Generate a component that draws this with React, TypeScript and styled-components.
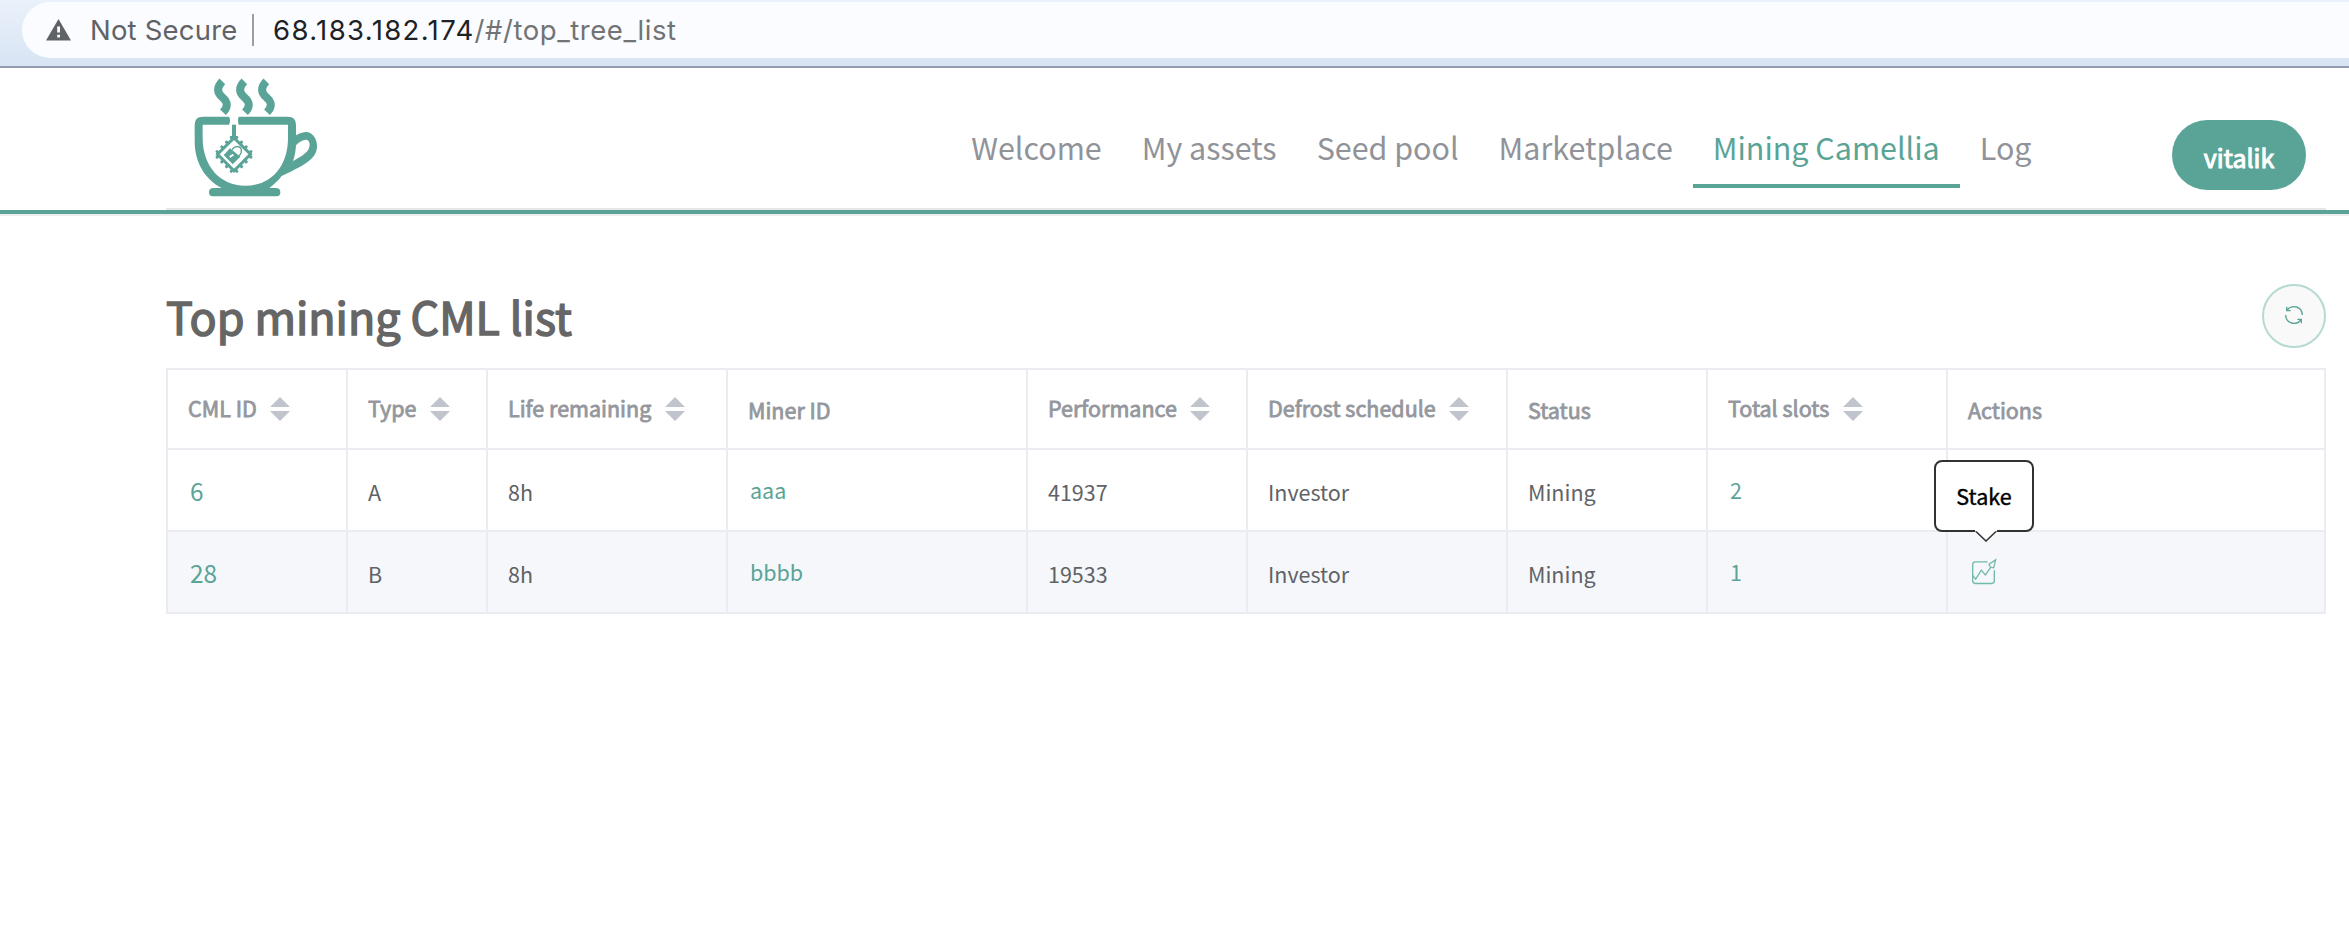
import React from "react";
import styled, { createGlobalStyle } from "styled-components";

const green = "#5aa497";
const line = "#ebecf2";

const GlobalStyle = createGlobalStyle`
  * { box-sizing: border-box; }
  body {
    margin: 0;
    background: #fff;
    font-family: "Noto Sans CJK SC", "Noto Sans", sans-serif;
    color: #606266;
    -webkit-font-smoothing: antialiased;
  }
`;

const Page = styled.div`
  width: 2349px;
  height: 930px;
  overflow: hidden;
`;

/* Browser bar */
const BrowserBar = styled.div`
  height: 68px;
  padding: 2px 0 8px 22px;
  border-bottom: 2px solid #939cae;
  background: linear-gradient(#eaf1fa, #d8e4f4);
`;

const AddressField = styled.div`
  height: 56px;
  display: flex;
  align-items: center;
  padding-left: 24px;
  border-radius: 28px 0 0 28px;
  background: #fbfcff;
  font-family: Inter, "Liberation Sans", sans-serif;
  font-size: 27.5px;
  line-height: 56px;
  color: #5f6368;
  white-space: pre;
`;

const SecurityLabel = styled.span`
  margin-left: 19px;
  letter-spacing: 0.2px;
`;

const AddressDivider = styled.span`
  width: 2px;
  height: 32px;
  margin: 0 19.5px 0 14px;
  background: #9b9ea3;
`;

const Host = styled.span`
  color: #202124;
  letter-spacing: 1.36px;
`;

const Path = styled.span`
  color: #717375;
  letter-spacing: 0.55px;
`;

/* Site header */
const Header = styled.header`
  height: 148px;
  border-bottom: 2px solid #eeeeee;
`;

const HeaderFrame = styled.div`
  border-bottom: 4px solid ${green};
  padding-left: 166px;
`;

const HeaderInner = styled.div`
  width: 2160px;
  height: 142px;
  display: flex;
  justify-content: flex-end;
  align-items: flex-start;
  border-bottom: 2px solid #e6e6e9;
`;

const Logo = styled.svg`
  width: 130px;
  height: 124px;
  margin: 8px auto 0 24px;
`;

const Nav = styled.nav`
  display: flex;
  margin-top: 36px;
  margin-right: 120.5px;
`;

const NavItem = styled.a<{ $active?: boolean }>`
  height: 84px;
  padding: 1px 20px 0;
  border-bottom: 4px solid ${(p) => (p.$active ? green : "transparent")};
  color: ${(p) => (p.$active ? green : "#909399")};
  font-size: 30.45px;
  line-height: 85px;
  white-space: nowrap;
`;

const UserButton = styled.button`
  width: 134px;
  height: 70px;
  margin: 52px 20px 0 0;
  padding: 3px 0 0;
  border: 0;
  border-radius: 35px;
  background: ${green};
  color: #fff;
  font: 25px/64px "Noto Sans CJK SC", sans-serif;
  -webkit-text-stroke: 1px #fff;
`;

/* Content */
const Content = styled.main`
  width: 2160px;
  margin-left: 166px;
  padding-top: 68px;
`;

const TitleRow = styled.div`
  height: 84px;
  display: flex;
  justify-content: space-between;
  align-items: flex-start;
`;

const Title = styled.h1`
  margin: 0;
  font-size: 44.8px;
  font-weight: 400;
  line-height: 64px;
  color: #666;
  -webkit-text-stroke: 1.5px #666;
`;

const RefreshButton = styled.button`
  width: 64px;
  height: 64px;
  display: grid;
  place-items: center;
  padding: 0 0 2px;
  border: 2px solid #b5dad3;
  border-radius: 50%;
  background: #f9f9f9;
`;

const Table = styled.div`
  width: 2160px;
  border: 2px solid ${line};
  border-width: 2px 0 0 2px;
  font-size: 21.5px;
`;

const Row = styled.div<{ $head?: boolean; $striped?: boolean }>`
  height: ${(p) => (p.$head ? 80 : 82)}px;
  display: grid;
  grid-template-rows: 100%;
  grid-template-columns: 180px 140px 240px 300px 220px 260px 200px 240px 378px;
  background: ${(p) => (p.$striped ? "#f5f7fb" : "#fff")};
`;

const Cell = styled.div`
  display: flex;
  align-items: center;
  padding: 2px 0 0 20px;
  border: solid ${line};
  border-width: 0 2px 2px 0;
  white-space: nowrap;
`;

const HeadCell = styled(Cell)<{ $sortable?: boolean }>`
  padding-top: ${(p) => (p.$sortable ? 0 : 2)}px;
  padding-bottom: ${(p) => (p.$sortable ? 2 : 0)}px;
  color: #94979d;
  -webkit-text-stroke: 0.8px #94979d;
`;

const HeadLabel = styled.span`
  margin-top: -2px;
`;

const SortIcon = styled.svg`
  width: 20px;
  height: 24px;
  margin: 1px 0 0 13.5px;
`;

const TextLink = styled.a<{ $large?: boolean }>`
  padding-left: 2px;
  margin-bottom: ${(p) => (p.$large ? 1 : 4)}px;
  color: ${green};
  font-size: ${(p) => (p.$large ? 24.4 : 21.5)}px;
`;

const ActionSlot = styled.div`
  position: relative;
  width: 32px;
  height: 78px;
  padding: 24px 0 0 3px;
`;

const Tooltip = styled.div`
  position: absolute;
  left: -34px;
  bottom: 80px;
  z-index: 1;
  width: 100px;
  height: 72px;
  border: 2px solid #303133;
  border-radius: 8px;
  background: #fff;
  color: #000;
  font-size: 21.5px;
  line-height: 68px;
  text-align: center;
  -webkit-text-stroke: 0.4px #000;
`;

const TooltipArrow = styled.svg`
  position: absolute;
  left: 39px;
  top: 67px;
  width: 22px;
  height: 13px;
`;

const WarningIcon = () => (
  <svg width="25" height="22" viewBox="0 0 25 22">
    <path d="M12.5 0 25 21.5H0Z" fill="#5f6368" />
    <path d="M11.2 7.5h2.8v6h-2.8zM11.2 15.7h2.8v2.8h-2.8z" fill="#fff" />
  </svg>
);

const steam = "M127 46C109 64 111 80 127 94C144 109 145 122 129 139";
const teeth = [-30, -10, 10, 30];

const CupLogo = () => (
  <Logo viewBox="30 30 390 372">
    <g fill="none" stroke={green} strokeWidth="24">
      <path d={steam} />
      <path d={steam} transform="translate(66 0)" />
      <path d={steam} transform="translate(132 0)" />
    </g>
    <path
      fill={green}
      fillRule="evenodd"
      d="M68 152H147Q153 164 147 176H68V215C68 300 120 359 196 359C275 359 324 300 324 215V176H176Q172 164 176 152H324Q348 152 348 176V208C360 200 372 198 380 198C400 200 412 222 411 242C409 275 385 292 305 330C295 345 280 356 268 366H290Q301 367 301 379Q301 391 290 391H98Q87 391 87 379Q87 367 98 366H125C75 340 44 290 44 225V176Q44 152 68 152ZM348 238C360 226 375 218 383 223C392 229 389 244 384 253C376 265 350 280 339 285C345 268 347 255 348 238Z"
    />
    <path d="M162 176V214" stroke={green} strokeWidth="12" />
    <g transform="translate(162 265) rotate(45)" stroke={green} strokeWidth="9">
      <rect x="-35" y="-35" width="70" height="70" fill="none" />
      <g strokeLinecap="round">
        {teeth.map((t) => (
          <path key={t} d={`M${t} -36V-42M${t} 36V42M-36 ${t}H-42M36 ${t}H42`} />
        ))}
      </g>
    </g>
    <path d="M131 267L150 247L181 272L158 295Z" fill={green} />
    <path d="M157 251C161 239 181 238 184 251Q186 261 177 270" fill="none" stroke={green} strokeWidth="4" />
    <path d="M149 273L160 266" stroke="#fff" strokeWidth="6" />
  </Logo>
);

const RefreshIcon = () => (
  <svg width="20" height="20" viewBox="0 0 60 60" fill="none" stroke={green} strokeWidth="4">
    <path d="M9 15C24-3 54 4 55 30M5 30C6 56 36 63 51 45" />
    <path d="M8 5V17H20M40 43H52V55" />
  </svg>
);

const StakeIcon = () => (
  <svg width="26" height="27" viewBox="0 0 78 80" fill="none" stroke="#73b9ad" strokeWidth="4">
    <path d="M50 11H13Q5 11 5 19V68Q5 76 13 76H62Q70 76 70 68V36" />
    <path d="M5 52L14 63L31 36L43 50L60 27M74 5L54 18L58 27L68 29Z" />
  </svg>
);

const columns: { label: string; sortable?: boolean }[] = [
  { label: "CML ID", sortable: true },
  { label: "Type", sortable: true },
  { label: "Life remaining", sortable: true },
  { label: "Miner ID" },
  { label: "Performance", sortable: true },
  { label: "Defrost schedule", sortable: true },
  { label: "Status" },
  { label: "Total slots", sortable: true },
  { label: "Actions" },
];

const rows = [
  { id: "6", type: "A", life: "8h", miner: "aaa", performance: "41937", schedule: "Investor", status: "Mining", slots: "2" },
  { id: "28", type: "B", life: "8h", miner: "bbbb", performance: "19533", schedule: "Investor", status: "Mining", slots: "1", stake: true },
];

const navItems = ["Welcome", "My assets", "Seed pool", "Marketplace", "Mining Camellia", "Log"];

export default function App() {
  return (
    <Page>
      <GlobalStyle />
      <BrowserBar>
        <AddressField>
          <WarningIcon />
          <SecurityLabel>Not Secure</SecurityLabel>
          <AddressDivider />
          <Host>68.183.182.174</Host>
          <Path>/#/top_tree_list</Path>
        </AddressField>
      </BrowserBar>
      <Header>
        <HeaderFrame>
          <HeaderInner>
            <CupLogo />
            <Nav>
              {navItems.map((item) => (
                <NavItem key={item} $active={item === "Mining Camellia"}>{item}</NavItem>
              ))}
            </Nav>
            <UserButton>vitalik</UserButton>
          </HeaderInner>
        </HeaderFrame>
      </Header>
      <Content>
        <TitleRow>
          <Title>Top mining CML list</Title>
          <RefreshButton aria-label="Refresh">
            <RefreshIcon />
          </RefreshButton>
        </TitleRow>
        <Table>
          <Row $head>
            {columns.map(({ label, sortable }) => (
              <HeadCell key={label} $sortable={sortable}>
                <HeadLabel>{label}</HeadLabel>
                {sortable && (
                  <SortIcon viewBox="0 0 20 24" fill="#c0c4cc" stroke="none">
                    <path d="M0 10L10 0L20 10ZM0 14H20L10 24Z" />
                  </SortIcon>
                )}
              </HeadCell>
            ))}
          </Row>
          {rows.map((row, i) => (
            <Row key={row.id} $striped={i % 2 === 1}>
              <Cell><TextLink $large>{row.id}</TextLink></Cell>
              <Cell>{row.type}</Cell>
              <Cell>{row.life}</Cell>
              <Cell><TextLink>{row.miner}</TextLink></Cell>
              <Cell>{row.performance}</Cell>
              <Cell>{row.schedule}</Cell>
              <Cell>{row.status}</Cell>
              <Cell><TextLink>{row.slots}</TextLink></Cell>
              <Cell>
                {row.stake && (
                  <ActionSlot>
                    <StakeIcon />
                    <Tooltip>
                      Stake
                      <TooltipArrow viewBox="0 0 22 13">
                        <path d="M0 0V2L11 12L22 2V0Z" fill="#fff" />
                        <path d="M1 2.5L11 12L21 2.5" fill="none" stroke="#303133" strokeWidth="1.5" />
                      </TooltipArrow>
                    </Tooltip>
                  </ActionSlot>
                )}
              </Cell>
            </Row>
          ))}
        </Table>
      </Content>
    </Page>
  );
}
